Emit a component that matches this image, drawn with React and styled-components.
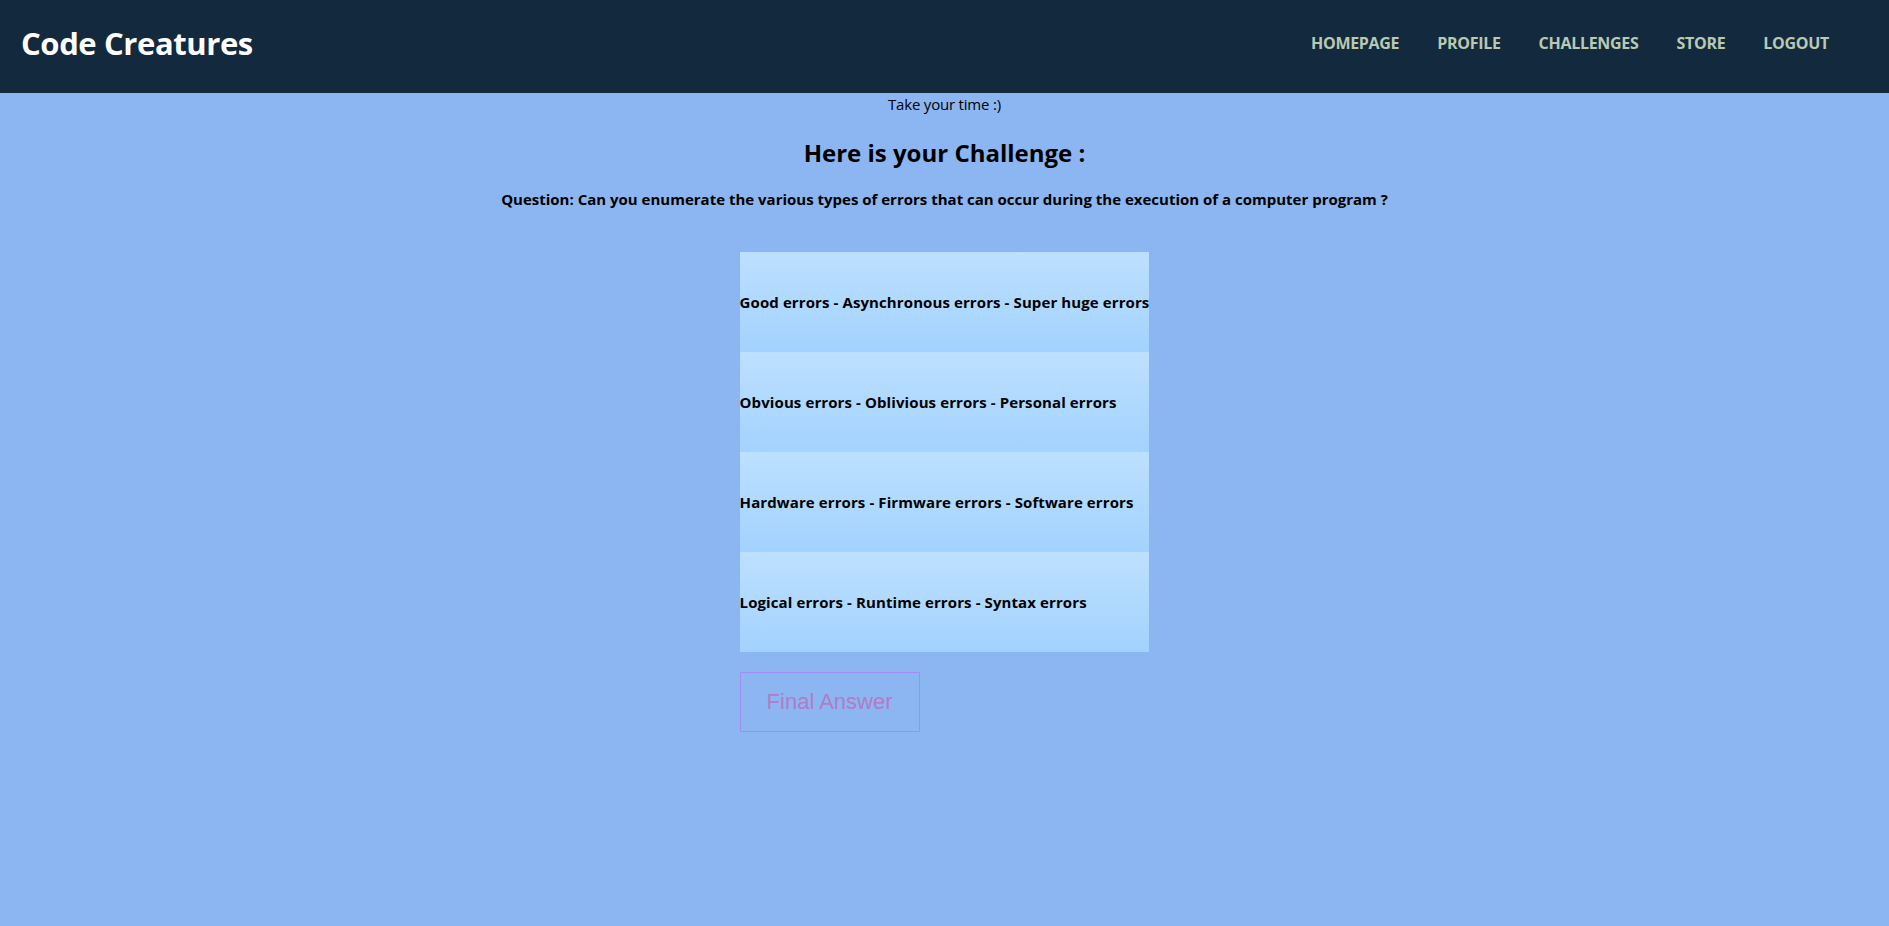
import React, { useState } from "react";
import styled, { createGlobalStyle } from "styled-components";

const GlobalStyle = createGlobalStyle`
  body {
    margin: 0;
    background-color: #8cb6f2;
    font-family: "Open Sans", "Noto Sans", sans-serif;
  }
`;

const Header = styled.header`
  height: 93px;
  background-color: #13293d;
  display: flex;
  align-items: center;
  justify-content: space-between;
  padding: 0 60px 0 21px;
`;

const Logo = styled.h1`
  margin: -8px 0 0;
  color: #ffffff;
  font-size: 31px;
  font-weight: 700;
  letter-spacing: -0.4px;
`;

const Nav = styled.nav`
  display: flex;
  gap: 38px;
  margin-top: -8px;
`;

const NavLink = styled.a`
  color: #bac9b1;
  font-size: 16px;
  font-weight: 700;
  letter-spacing: -0.3px;
  text-decoration: none;
  cursor: pointer;
`;

const Main = styled.main`
  display: flex;
  flex-direction: column;
  align-items: center;
  color: #000;
`;

const Hint = styled.p`
  margin: 0;
  font-size: 15px;
  line-height: 22px;
  letter-spacing: -0.2px;
`;

const Title = styled.h2`
  margin: 22px 0 0;
  font-size: 24px;
  line-height: 32px;
`;

const Question = styled.h4`
  margin: 19px 0 0;
  font-size: 15px;
  line-height: 22px;
`;

const Quiz = styled.div`
  margin-top: 42px;
  display: flex;
  flex-direction: column;
  align-items: flex-start;
`;

const Options = styled.div`
  display: flex;
  flex-direction: column;
`;

const Option = styled.div`
  height: 100px;
  display: flex;
  align-items: center;
  background: linear-gradient(#bde0fe, #a2d2ff);
  font-size: 15px;
  font-weight: 700;
  letter-spacing: 0.1px;
  cursor: pointer;
  outline: ${(p) => (p.$selected ? "2px solid #6c63ff" : "none")};
`;

const FinalButton = styled.button`
  margin-top: 20px;
  width: 180px;
  height: 60px;
  background: transparent;
  border: 1px solid #a58cf0;
  color: #b07cc6;
  font-family: "Liberation Sans", Arial, sans-serif;
  font-size: 22px;
  cursor: pointer;
`;

const answers = [
  "Good errors - Asynchronous errors - Super huge errors",
  "Obvious errors - Oblivious errors - Personal errors",
  "Hardware errors - Firmware errors - Software errors",
  "Logical errors - Runtime errors - Syntax errors",
];

const App = () => {
  const [selected, setSelected] = useState(null);

  return (
    <>
      <GlobalStyle />
      <Header>
        <Logo>Code Creatures</Logo>
        <Nav>
          <NavLink>HOMEPAGE</NavLink>
          <NavLink>PROFILE</NavLink>
          <NavLink>CHALLENGES</NavLink>
          <NavLink>STORE</NavLink>
          <NavLink>LOGOUT</NavLink>
        </Nav>
      </Header>
      <Main>
        <Hint>Take your time :)</Hint>
        <Title>Here is your Challenge :</Title>
        <Question>
          Question: Can you enumerate the various types of errors that can occur
          during the execution of a computer program ?
        </Question>
        <Quiz>
          <Options>
            {answers.map((a, i) => (
              <Option
                key={i}
                $selected={selected === i}
                onClick={() => setSelected(i)}
              >
                {a}
              </Option>
            ))}
          </Options>
          <FinalButton>Final Answer</FinalButton>
        </Quiz>
      </Main>
    </>
  );
};

export default App;
